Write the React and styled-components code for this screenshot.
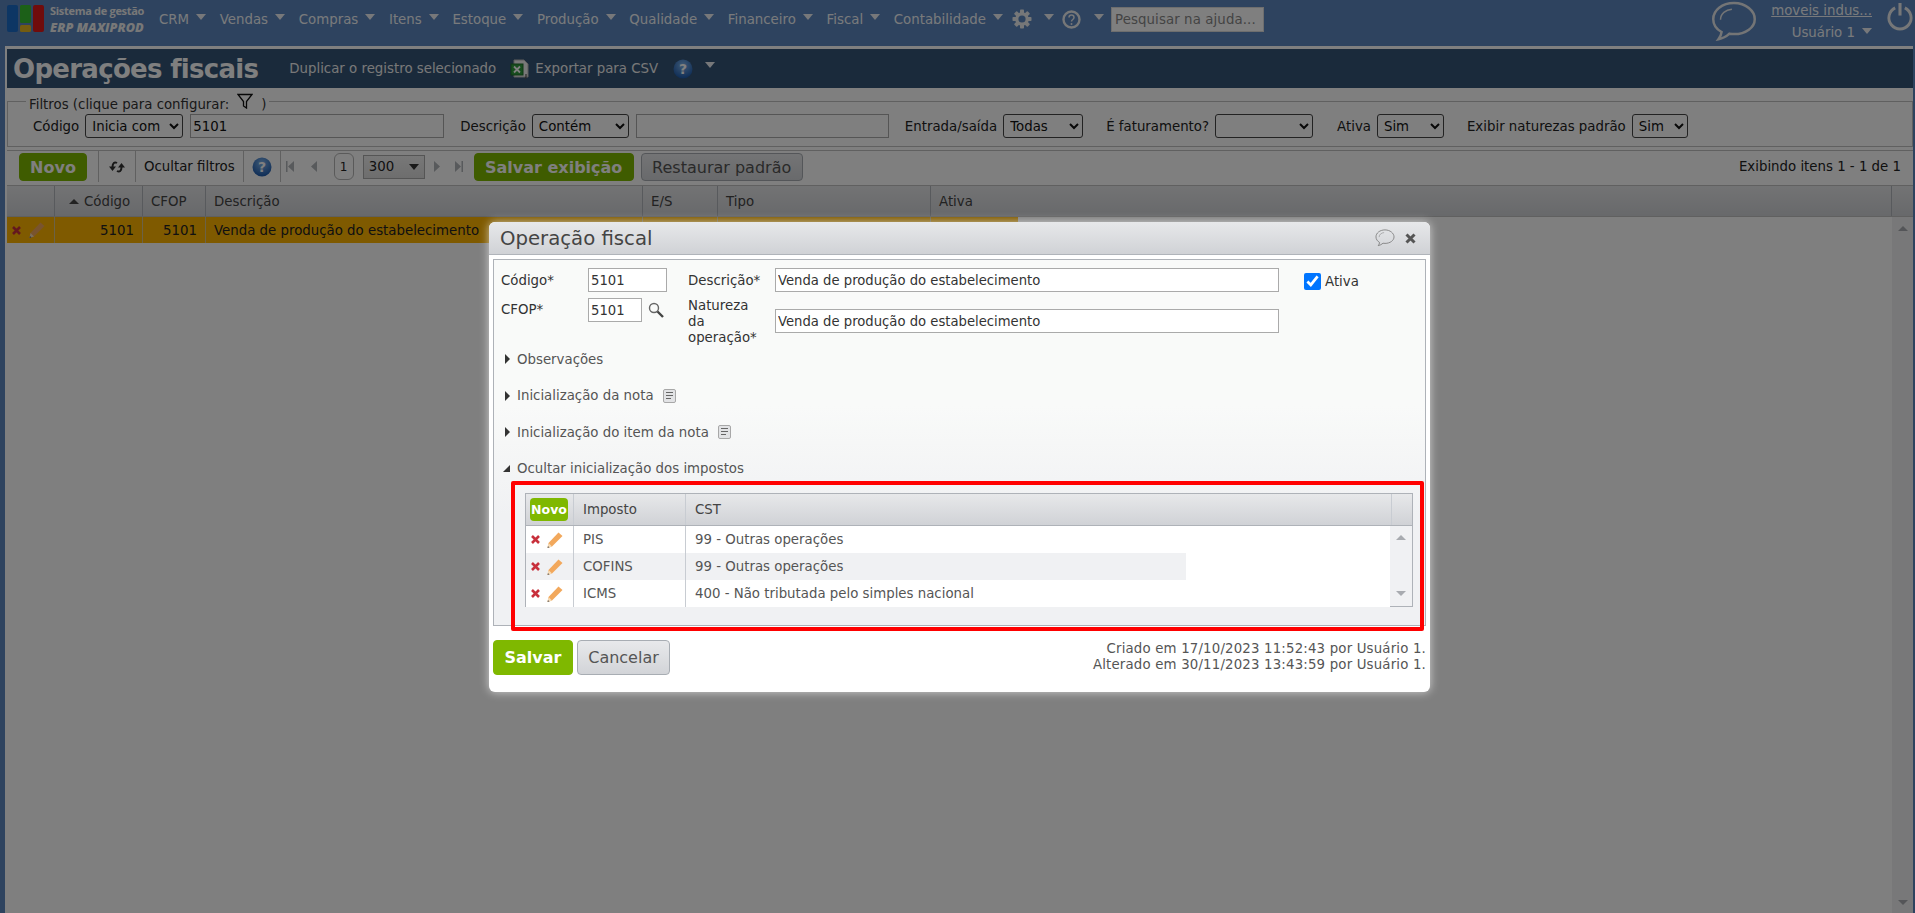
import React from 'react';
import styled, { createGlobalStyle } from 'styled-components';

const GlobalStyle = createGlobalStyle`
  html, body { margin: 0; padding: 0; height: 100%; overflow: hidden; background: #5c86be; }
  body, input, select, button { font-family: "DejaVu Sans", Verdana, sans-serif; font-size: 13.33px; }
  * { box-sizing: border-box; }
`;

const Page = styled.div`
  position: relative;
  width: 1915px;
  height: 913px;
  overflow: hidden;
  background: #5c86be;
  color: #222;
  display: flex;
  flex-direction: column;
`;

const Header = styled.header`
  height: 46px;
  flex: none;
  display: flex;
  align-items: flex-start;
  padding-left: 7px;
`;

const LogoMark = styled.svg`
  width: 37px;
  height: 28px;
  margin-top: 5px;
  flex: none;
`;

const LogoText = styled.div`
  width: 109px;
  margin-left: 6px;
  padding-top: 4px;
  color: #f0f0f0;
  font-family: "Open Sans", sans-serif;
  font-weight: 700;
  white-space: nowrap;
  small { display: block; font-size: 11px; line-height: 14px; letter-spacing: -0.3px; }
  b { display: block; font-size: 12.7px; line-height: 18px; font-style: italic; }
`;

const Nav = styled.nav`
  display: flex;
  align-items: center;
  height: 38px;
`;

const NavItem = styled.span`
  display: flex;
  align-items: center;
  color: #f2f5f8;
  white-space: nowrap;
  margin-right: ${p => p.$mr ?? 13.7}px;
`;

const Tri = styled.i`
  display: block;
  width: 0;
  height: 0;
  flex: none;
  border-left: 5px solid transparent;
  border-right: 5px solid transparent;
  border-top: 6px solid ${p => p.$color || '#eef1f5'};
  margin: 0 0 ${p => p.$up ?? 4}px ${p => p.$ml ?? 7}px;
`;

const NavIcon = styled.svg`
  width: ${p => p.$size}px;
  height: ${p => p.$size}px;
  flex: none;
  color: #eceef0;
`;

const HelpSearch = styled.input`
  width: 153px;
  height: 25px;
  margin-top: 7px;
  margin-left: 7px;
  padding: 0 3px;
  border: 1px solid #ddd;
  background: #fff;
  color: #222;
  letter-spacing: 0.1px;
  &::placeholder { color: #888; opacity: 1; }
`;

const HeaderRight = styled.div`
  margin-left: auto;
  display: flex;
  align-items: flex-start;
`;

const BubbleWrap = styled.div`
  margin-top: 1px;
`;

const AccountBox = styled.div`
  width: 102px;
  margin-left: 13px;
  margin-right: 14px;
  color: #f2f5f8;
  text-align: right;
  display: flex;
  flex-direction: column;
  align-items: flex-end;
  u { display: block; margin-top: 2px; line-height: 17px; }
  span { display: flex; align-items: center; margin-top: 5px; line-height: 17px; }
`;

const Shell = styled.main`
  flex: 1;
  min-height: 0;
  margin: 0 2px 0 5px;
  border-top: 3px solid #fff;
  border-left: 2px solid #fff;
  background: #fff;
  display: flex;
  flex-direction: column;
`;

const TitleBar = styled.div`
  height: 39px;
  flex: none;
  background: #345476;
  display: flex;
  align-items: center;
  padding-left: 6px;
  color: #f0f0f0;
`;

const PageTitle = styled.h1`
  margin: 0 31px 0 0;
  font-size: 26px;
  line-height: 32px;
  font-weight: 700;
  letter-spacing: -0.7px;
  color: #fff;
`;

const TitleLink = styled.span`
  display: flex;
  align-items: center;
  gap: 5px;
  margin-right: ${p => p.$mr ?? 14}px;
  white-space: nowrap;
`;

const FilterBox = styled.fieldset`
  margin: 2px 0 0;
  padding: 0;
  height: 57px;
  border: 1px solid #c0c0c0;
  min-width: 0;
`;

const FilterLegend = styled.legend`
  margin-left: 18px;
  padding: 6px 3px 0;
  display: flex;
  align-items: center;
  gap: 8px;
  color: #333;
  height: 22px;
`;

const FilterRow = styled.div`
  display: flex;
  align-items: center;
  height: 24px;
  margin-top: 2px;
  padding-left: 25px;
`;

const FilterLabel = styled.label`
  margin-left: ${p => p.$ml ?? 0}px;
  margin-right: 6px;
  white-space: nowrap;
`;

const Select = styled.select`
  width: ${p => p.$w}px;
  height: 24px;
  flex: none;
  padding: 0 2px;
  border: 1px solid #444;
  border-radius: 3px;
  background: #fff;
  color: #111;
`;

const FilterInput = styled.input`
  width: ${p => p.$w}px;
  height: 24px;
  margin-left: ${p => p.$ml ?? 7}px;
  flex: none;
  padding: 0 2px;
  border: 1px solid #aaa;
  background: #fff;
  color: #111;
`;

const Toolbar = styled.div`
  height: 35px;
  flex: none;
  margin-top: 3px;
  border-top: 1px solid #c0c0c0;
  display: flex;
  align-items: flex-start;
  padding: 2px 12px 0 12px;
`;

const Button = styled.button`
  height: ${p => p.$h ?? 28}px;
  width: ${p => p.$w}px;
  padding: 0;
  flex: none;
  margin-left: ${p => p.$ml ?? 0}px;
  border-radius: 4px;
  font-size: ${p => p.$fs ?? 16}px;
  font-weight: ${p => (p.$primary ? 700 : 400)};
  color: ${p => (p.$primary ? '#fff' : '#555')};
  border: 1px solid ${p => (p.$primary ? '#7fb800' : '#a8adb3')};
  background: ${p => (p.$primary ? '#7fb800' : 'linear-gradient(#e8e9eb, #d2d4d8)')};
`;

const ToolCell = styled.div`
  height: 31px;
  margin-top: -2px;
  flex: none;
  display: flex;
  align-items: center;
  padding: 0 ${p => p.$px ?? 8}px;
  border-left: 1px solid #c0c0c0;
  margin-left: ${p => p.$ml ?? 0}px;
  white-space: nowrap;
`;

const Pager = styled.div`
  height: 31px;
  margin-top: -2px;
  display: flex;
  align-items: center;
  border-left: 1px solid #c0c0c0;
  padding-left: 5px;
`;

const PagerIcon = styled.svg`
  width: 8px;
  height: 11px;
  flex: none;
  margin-right: ${p => p.$mr}px;
  color: #b0b4b8;
`;

const PageBox = styled.span`
  width: 20px;
  height: 27px;
  flex: none;
  display: flex;
  align-items: center;
  justify-content: center;
  border: 1px solid #b5b5b5;
  border-radius: 6px;
  background: #fff;
  font-size: 12px;
  margin-right: 9px;
`;

const PageSize = styled.span`
  width: 62px;
  height: 24px;
  flex: none;
  display: flex;
  align-items: center;
  justify-content: space-between;
  padding: 0 5px;
  border: 1px solid #aaa;
  background: linear-gradient(#f0f0f0, #dcdcdc);
  margin-right: 9px;
`;

const Showing = styled.span`
  margin-left: auto;
  line-height: 28px;
  white-space: nowrap;
`;

const GridHead = styled.div`
  height: 32px;
  flex: none;
  border-top: 1px solid #c0c0c0;
  border-bottom: 1px solid #c0c0c0;
  background: linear-gradient(#e6e7e9, #d0d2d6);
  display: grid;
  grid-template-columns: ${p => p.$cols};
  color: #444;
`;

const HeadCell = styled.div`
  display: flex;
  align-items: center;
  gap: 5px;
  padding-left: ${p => p.$pl ?? 8}px;
  border-right: ${p => (p.$plain ? '0' : '1px solid #b0b4ba')};
`;

const GridBody = styled.div`
  flex: 1;
  min-height: 0;
  position: relative;
  display: flex;
`;

const GridRows = styled.div`
  flex: 1;
  min-width: 0;
`;

const DataRow = styled.div`
  width: ${p => p.$w || 'auto'};
  height: 26px;
  display: grid;
  grid-template-columns: ${p => p.$cols};
  align-items: stretch;
  background: ${p => p.$bg || 'transparent'};
`;

const DataCell = styled.div`
  display: flex;
  align-items: center;
  justify-content: ${p => (p.$right ? 'flex-end' : 'flex-start')};
  gap: 7px;
  padding: 0 ${p => p.$pr ?? 8}px 0 ${p => p.$pl ?? 8}px;
  border-right: ${p => (p.$line ? '1px solid #d8c48c' : '0')};
  white-space: nowrap;
`;

const ScrollTrack = styled.div`
  width: 21px;
  flex: none;
  background: #f0f1f3;
  display: flex;
  flex-direction: column;
  justify-content: space-between;
  align-items: center;
  padding: 9px 0 8px;
`;

const ScrollArrow = styled.i`
  display: block;
  width: 0;
  height: 0;
  border-left: 5px solid transparent;
  border-right: 5px solid transparent;
  ${p => (p.$down ? 'border-top' : 'border-bottom')}: 5px solid ${p => p.$color || '#a8abb0'};
`;

const Overlay = styled.div`
  position: absolute;
  inset: 0;
  background: rgba(0, 0, 0, 0.5);
`;

const Modal = styled.section`
  position: absolute;
  left: 489px;
  top: 222px;
  width: 941px;
  height: 470px;
  background: #fff;
  border-radius: 6px;
  box-shadow: 0 0 10px rgba(255, 255, 255, 0.65);
  color: #333;
`;

const ModalHead = styled.div`
  height: 33px;
  display: flex;
  align-items: center;
  padding: 0 14px 0 11px;
  background: linear-gradient(#e7e8ea, #d0d2d6);
  border-bottom: 1px solid #b0b4ba;
  border-radius: 6px 6px 0 0;
`;

const ModalTitle = styled.h2`
  margin: 2px auto 0 0;
  font-size: 19.7px;
  line-height: 24px;
  font-weight: 400;
  color: #444;
`;

const ModalPanel = styled.div`
  margin: 4px 4px 0;
  height: 367px;
  border: 1px solid #aeb2b8;
  background: linear-gradient(#f9faf9 40%, #f0f1f3 70%);
  padding-top: 8px;
`;

const FormGrid = styled.div`
  display: grid;
  grid-template-columns: 87px 100px 87px 504px 25px auto;
  grid-template-rows: 24px 48px;
  row-gap: 6px;
  padding-left: 7px;
`;

const FormLabel = styled.label`
  display: block;
  width: 74px;
  line-height: 16px;
  padding-top: ${p => p.$pt ?? 0}px;
`;

const TextField = styled.input`
  width: ${p => p.$w};
  height: 24px;
  margin-top: ${p => p.$mt ?? 0}px;
  padding: 0 2px;
  border: 1px solid #aaa;
  background: #fff;
  color: #333;
  font-size: 13.2px;
`;

const CfopField = styled.div`
  display: flex;
  align-items: flex-start;
  gap: 6px;
`;

const CfopSearch = styled.svg`
  width: 16px;
  height: 16px;
  margin-top: 4px;
`;

const CheckLabel = styled.label`
  grid-column: 6;
  grid-row: 1;
  display: flex;
  align-items: center;
  gap: 4px;
  padding-top: 2px;
  height: 24px;
  input { width: 17px; height: 17px; margin: 0; accent-color: #0075ff; }
`;

const SectionList = styled.div`
  display: flex;
  flex-direction: column;
  gap: 10.5px;
`;

const SectionRow = styled.div`
  height: 26px;
  display: flex;
  align-items: center;
  padding-left: 11px;
  color: #555;
`;

const Caret = styled.i`
  display: block;
  width: 0;
  height: 0;
  margin-right: 7px;
  ${p =>
    p.$open
      ? 'border-left: 7px solid transparent; border-bottom: 7px solid #333; margin-left: -2px;'
      : 'border-left: 5px solid #333; border-top: 5px solid transparent; border-bottom: 5px solid transparent;'}
`;

const NoteIcon = styled.svg`
  width: 13px;
  height: 14px;
  margin-left: 9px;
`;

const TaxTable = styled.div`
  margin: 11.5px 12px 0 31px;
  height: 114px;
  border: 1px solid #aeb2b8;
  background: #fff;
  display: flex;
  flex-direction: column;
`;

const TaxBody = styled.div`
  flex: 1;
  display: flex;
  min-height: 0;
`;

const TaxHead = styled.div`
  height: 32px;
  flex: none;
  display: grid;
  grid-template-columns: 48px 112px 706px 1fr;
  background: linear-gradient(#e7e8ea, #d0d2d6);
  border-bottom: 1px solid #aeb2b8;
  color: #444;
`;

const TaxRows = styled.div`
  flex: 1;
  min-width: 0;
`;

const TaxRow = styled.div`
  height: 27px;
  width: ${p => (p.$striped ? '660px' : '100%')};
  display: grid;
  grid-template-columns: 48px 112px 1fr;
  background: ${p => (p.$striped ? '#f0f1f3' : '#fff')};
  color: #555;
`;

const TaxActions = styled.div`
  display: flex;
  align-items: center;
  gap: 6px;
  padding-left: 5px;
  border-right: 1px solid #c8ccd2;
`;

const TaxCell = styled.div`
  display: flex;
  align-items: ${p => (p.$top ? 'flex-start' : 'center')};
  padding-left: ${p => p.$pl ?? 9}px;
  border-right: ${p => (p.$line ? '1px solid #c8ccd2' : '0')};
  white-space: nowrap;
`;

const TaxNew = styled.button`
  width: 38px;
  height: 23px;
  margin: 4px 0 0 4px;
  padding: 0;
  border: 0;
  border-radius: 4px;
  background: #7fb800;
  color: #fff;
  font-size: 12.5px;
  font-weight: 700;
`;

const TaxScroll = styled(ScrollTrack)`
  width: 22px;
  padding: 9px 0 10px;
`;

const RedMark = styled.div`
  position: absolute;
  left: 22px;
  top: 259px;
  width: 913px;
  height: 150px;
  border: 4px solid #f00;
  border-radius: 2px;
  pointer-events: none;
`;

const ModalFoot = styled.div`
  margin: 14px 4px 0;
  display: flex;
  justify-content: space-between;
`;

const AuditText = styled.div`
  text-align: right;
  line-height: 16px;
  padding-top: 1px;
  color: #555;
  letter-spacing: 0.17px;
`;

const FootButtons = styled.div`
  display: flex;
  gap: 4px;
`;

const CloseIcon = styled.svg`
  width: 11px;
  height: 11px;
  margin-left: 10px;
`;

const GRID_COLS = '48px 88px 63px 437px 75px 213px 87px 1fr 21px';
const ROW_COLS = '48px 88px 63px 437px 75px 213px 87px';
const NAV = ['CRM', 'Vendas', 'Compras', 'Itens', 'Estoque', 'Produção', 'Qualidade', 'Financeiro', 'Fiscal'];
const TAXES = [
  ['PIS', '99 - Outras operações'],
  ['COFINS', '99 - Outras operações'],
  ['ICMS', '400 - Não tributada pelo simples nacional'],
];

function Logo() {
  return (
    <LogoMark viewBox="0 0 37 28">
      <rect x="0" y="0" width="11" height="27" rx="2" fill="#1a6cc8" />
      <rect x="13" y="0" width="11" height="18" rx="1.500" fill="#38c030" />
      <rect x="13" y="20" width="11" height="7" rx="1.500" fill="#e8b820" />
      <rect x="26" y="0" width="11" height="27" rx="2" fill="#e01818" />
    </LogoMark>
  );
}

function Gear() {
  return (
    <NavIcon $size={20} viewBox="0 0 20 20">
      <g fill="currentColor">
        {[0, 45, 90, 135, 180, 225, 270, 315].map(a => (
          <rect key={a} x="8" y="0.5" width="4" height="5" rx="0.8" transform={`rotate(${a} 10 10)`} />
        ))}
      </g>
      <circle cx="10" cy="10" r="5.2" fill="none" stroke="currentColor" strokeWidth="3.2" />
    </NavIcon>
  );
}

function RingHelp() {
  return (
    <NavIcon $size={19} viewBox="0 0 19 19">
      <circle cx="9.5" cy="9.5" r="8" fill="none" stroke="currentColor" strokeWidth="2.4" />
      <path d="M7 7.5c0-3.2 5-3.2 5 0 0 2-2.500 2-2.500 4" fill="none" stroke="currentColor" strokeWidth="1.500" />
      <circle cx="9.5" cy="14" r="1" fill="currentColor" />
    </NavIcon>
  );
}

function Bubble({ size, color, stroke }) {
  return (
    <svg width={size} height={size * 0.88} viewBox="0 0 44 39" fill="none" style={{ color, flex: 'none' }}>
      <path
        d="M22 2C10.500 2 2 9 2 17.500c0 5.200 3.200 9.600 8 12.400-.3 2.600-1.500 5-3 7 4-.7 8-3 10.600-5.400 1.400.2 2.900.4 4.400.4 11.500 0 20-6.600 20-14.400S33.500 2 22 2z"
        stroke="currentColor"
        strokeWidth={stroke}
      />
      <path d="M9 18c0-6 5-9.500 11-10" stroke="currentColor" strokeWidth={stroke * 0.6} />
    </svg>
  );
}

function PowerIcon() {
  return (
    <NavIcon $size={28} viewBox="0 0 28 29" style={{ marginTop: 3, marginRight: 1 }}>
      <path d="M9 5A11.500 11.500 0 1 0 19 5" fill="none" stroke="currentColor" strokeWidth="3" />
      <path d="M14 0v13" stroke="currentColor" strokeWidth="3.200" />
    </NavIcon>
  );
}

function BlueHelp({ size }) {
  return (
    <svg width={size} height={size} viewBox="0 0 20 20" style={{ flex: 'none' }}>
      <defs>
        <radialGradient id="helpBall" cx="50%" cy="30%" r="75%">
          <stop offset="0%" stopColor="#7fb4ec" />
          <stop offset="100%" stopColor="#1553a8" />
        </radialGradient>
      </defs>
      <circle cx="10" cy="10" r="9.500" fill="url(#helpBall)" />
      <text x="10" y="15" textAnchor="middle" fontSize="14" fontWeight="700" fill="#fff" fontFamily="'DejaVu Sans', sans-serif">?</text>
    </svg>
  );
}

function Excel() {
  return (
    <svg width="20" height="20" viewBox="0 0 20 20" style={{ flex: 'none' }}>
      <path d="M4 1h10l4 4v13H4z" fill="#f2f2f2" stroke="#b8b8b8" />
      <rect x="1" y="5" width="12" height="11" fill="#2f9a3c" stroke="#1f6e2a" />
      <path d="M4 7.500l6 6M10 7.500l-6 6" stroke="#fff" strokeWidth="1.800" />
      <path d="M16 15v3l-1 2" stroke="#555" strokeWidth="1.200" fill="none" />
    </svg>
  );
}

function Funnel() {
  return (
    <svg width="16" height="16" viewBox="0 0 16 16" fill="none" stroke="#111" strokeWidth="1.300" style={{ marginTop: -6 }}>
      <path d="M1 1.500h14L9.500 8.500V15L6.500 13V8.500z" />
    </svg>
  );
}

function Refresh() {
  return (
    <svg width="18" height="14" viewBox="0 0 18 14" style={{ flex: 'none' }}>
      <path d="M9 3C6.500 1.500 4.500 3 4.500 7M9 11c2.500 1.500 4.500 0 4.500-4" fill="none" stroke="#333" strokeWidth="2" />
      <path d="M1 6.500h7L4.500 11zM10 7.500h7L13.500 3z" fill="#333" />
    </svg>
  );
}

function Pencil() {
  return (
    <svg width="18" height="18" viewBox="0 0 17 18" style={{ flex: 'none' }}>
      <path d="M1 17l1-5L12 1.500 16 5 5.500 15.500z" fill="#f2a85c" />
      <path d="M1 17l1-5 3.500 3.500z" fill="#f6dcb8" />
      <path d="M1 17l.5-2 1.500 1.500z" fill="#666" />
    </svg>
  );
}

function Cross() {
  return (
    <svg width="9" height="9" viewBox="0 0 9 9" style={{ flex: 'none' }}>
      <path d="M1 1l7 7M8 1L1 8" stroke="#c8303c" strokeWidth="2.600" />
    </svg>
  );
}

function PagerGlyph({ dir, bar, mr }) {
  const left = dir === 'left';
  return (
    <PagerIcon viewBox="0 0 8 11" $mr={mr}>
      <path d={left ? 'M8 0v11L2 5.500z' : 'M0 0v11l6-5.500z'} fill="currentColor" />
      {bar && <rect x={left ? 0 : 6.5} y="0" width="1.500" height="11" fill="currentColor" />}
    </PagerIcon>
  );
}

function Note() {
  return (
    <NoteIcon viewBox="0 0 13 14">
      <rect x="0.500" y="0.500" width="12" height="13" rx="1.500" fill="#e2e3e5" stroke="#a8a8a8" />
      <path d="M3 3.500h7M3 6.500h7M3 9.500h5" stroke="#666" strokeWidth="1.200" />
    </NoteIcon>
  );
}

export default function App() {
  return (
    <Page>
      <GlobalStyle />
      <Header>
        <Logo />
        <LogoText>
          <small>Sistema de gestão</small>
          <b>ERP MAXIPROD</b>
        </LogoText>
        <Nav>
          {NAV.map(label => (
            <NavItem key={label}>
              {label}
              <Tri />
            </NavItem>
          ))}
          <NavItem $mr={9}>Contabilidade<Tri /></NavItem>
          <NavItem $mr={8}><Gear /><Tri $ml={12} /></NavItem>
          <NavItem $mr={0}><RingHelp /><Tri $ml={13} /></NavItem>
        </Nav>
        <HelpSearch placeholder="Pesquisar na ajuda..." />
        <HeaderRight>
          <BubbleWrap><Bubble size={46} color="#e8eaec" stroke={2.4} /></BubbleWrap>
          <AccountBox>
            <u>moveis indus...</u>
            <span>Usuário 1<Tri /></span>
          </AccountBox>
          <PowerIcon />
        </HeaderRight>
      </Header>

      <Shell>
        <TitleBar>
          <PageTitle>Operações fiscais</PageTitle>
          <TitleLink>Duplicar o registro selecionado</TitleLink>
          <TitleLink $mr={15}><Excel />Exportar para CSV</TitleLink>
          <BlueHelp size={20} />
          <Tri $ml={12} $up={8} />
        </TitleBar>

        <FilterBox>
          <FilterLegend>Filtros (clique para configurar: <Funnel />)</FilterLegend>
          <FilterRow>
            <FilterLabel>Código</FilterLabel>
            <Select $w={98} defaultValue="i"><option value="i">Inicia com</option></Select>
            <FilterInput $w={254} defaultValue="5101" />
            <FilterLabel $ml={16}>Descrição</FilterLabel>
            <Select $w={97}><option>Contém</option></Select>
            <FilterInput $w={253} />
            <FilterLabel $ml={16}>Entrada/saída</FilterLabel>
            <Select $w={80}><option>Todas</option></Select>
            <FilterLabel $ml={23}>É faturamento?</FilterLabel>
            <Select $w={98}><option></option></Select>
            <FilterLabel $ml={24}>Ativa</FilterLabel>
            <Select $w={67}><option>Sim</option></Select>
            <FilterLabel $ml={23}>Exibir naturezas padrão</FilterLabel>
            <Select $w={56}><option>Sim</option></Select>
          </FilterRow>
        </FilterBox>

        <Toolbar>
          <Button $primary $w={68}>Novo</Button>
          <ToolCell $ml={11} $px={9}><Refresh /></ToolCell>
          <ToolCell>Ocultar filtros</ToolCell>
          <ToolCell><BlueHelp size={20} /></ToolCell>
          <Pager>
            <PagerGlyph dir="left" bar mr={15} />
            <PagerGlyph dir="left" mr={17} />
            <PageBox>1</PageBox>
            <PageSize>300<Tri $color="#333" $ml={0} $up={0} /></PageSize>
            <PagerGlyph dir="right" mr={13} />
            <PagerGlyph dir="right" bar mr={11} />
          </Pager>
          <Button $primary $w={160}>Salvar exibição</Button>
          <Button $w={162} $ml={7}>Restaurar padrão</Button>
          <Showing>Exibindo itens 1 - 1 de 1</Showing>
        </Toolbar>

        <GridHead $cols={GRID_COLS}>
          <HeadCell />
          <HeadCell $pl={14}><ScrollArrow $color="#444" />Código</HeadCell>
          <HeadCell>CFOP</HeadCell>
          <HeadCell>Descrição</HeadCell>
          <HeadCell>E/S</HeadCell>
          <HeadCell>Tipo</HeadCell>
          <HeadCell $plain>Ativa</HeadCell>
          <HeadCell />
          <HeadCell $plain />
        </GridHead>

        <GridBody>
          <GridRows>
            <DataRow $cols={ROW_COLS} $bg="#ffb400" $w="1011px">
              <DataCell $line $pl={5} $pr={0}><Cross /><Pencil /></DataCell>
              <DataCell $line $right>5101</DataCell>
              <DataCell $line $right>5101</DataCell>
              <DataCell $line>Venda de produção do estabelecimento</DataCell>
              <DataCell $line />
              <DataCell $line />
              <DataCell />
            </DataRow>
          </GridRows>
          <ScrollTrack>
            <ScrollArrow />
            <ScrollArrow $down />
          </ScrollTrack>
        </GridBody>
      </Shell>

      <Overlay />

      <Modal>
        <ModalHead>
          <ModalTitle>Operação fiscal</ModalTitle>
          <Bubble size={20} color="#777" stroke={1.8} />
          <CloseIcon viewBox="0 0 11 11">
            <path d="M1.500 1.500l8 8M9.500 1.500l-8 8" stroke="#555" strokeWidth="3" />
          </CloseIcon>
        </ModalHead>

        <ModalPanel>
          <FormGrid>
            <FormLabel $pt={5}>Código*</FormLabel>
            <TextField $w="79px" defaultValue="5101" />
            <FormLabel $pt={5}>Descrição*</FormLabel>
            <TextField $w="504px" defaultValue="Venda de produção do estabelecimento" />
            <span />
            <CheckLabel><input type="checkbox" defaultChecked />Ativa</CheckLabel>
            <FormLabel $pt={4}>CFOP*</FormLabel>
            <CfopField>
              <TextField $w="54px" defaultValue="5101" />
              <CfopSearch viewBox="0 0 16 16" fill="none">
                <circle cx="6" cy="6" r="4.500" stroke="#666" strokeWidth="1.400" />
                <path d="M9.500 9.500L15 15" stroke="#444" strokeWidth="2.400" />
              </CfopSearch>
            </CfopField>
            <FormLabel>Natureza da operação*</FormLabel>
            <TextField $w="504px" $mt={11} defaultValue="Venda de produção do estabelecimento" />
          </FormGrid>

          <SectionList>
            <SectionRow><Caret />Observações</SectionRow>
            <SectionRow><Caret />Inicialização da nota<Note /></SectionRow>
            <SectionRow><Caret />Inicialização do item da nota<Note /></SectionRow>
            <SectionRow><Caret $open />Ocultar inicialização dos impostos</SectionRow>
          </SectionList>

          <TaxTable>
            <TaxHead>
              <TaxCell $line $top $pl={0}><TaxNew>Novo</TaxNew></TaxCell>
              <TaxCell $line>Imposto</TaxCell>
              <TaxCell $line>CST</TaxCell>
              <TaxCell />
            </TaxHead>
            <TaxBody>
              <TaxRows>
                {TAXES.map(([tax, cst], i) => (
                  <TaxRow key={tax} $striped={i === 1}>
                    <TaxActions><Cross /><Pencil /></TaxActions>
                    <TaxCell $line>{tax}</TaxCell>
                    <TaxCell>{cst}</TaxCell>
                  </TaxRow>
                ))}
              </TaxRows>
              <TaxScroll>
                <ScrollArrow />
                <ScrollArrow $down />
              </TaxScroll>
            </TaxBody>
          </TaxTable>
        </ModalPanel>

        <ModalFoot>
          <FootButtons>
            <Button $primary $w={80} $h={35}>Salvar</Button>
            <Button $w={93} $h={35}>Cancelar</Button>
          </FootButtons>
          <AuditText>
            Criado em 17/10/2023 11:52:43 por Usuário 1.<br />
            Alterado em 30/11/2023 13:43:59 por Usuário 1.
          </AuditText>
        </ModalFoot>

        <RedMark />
      </Modal>
    </Page>
  );
}
